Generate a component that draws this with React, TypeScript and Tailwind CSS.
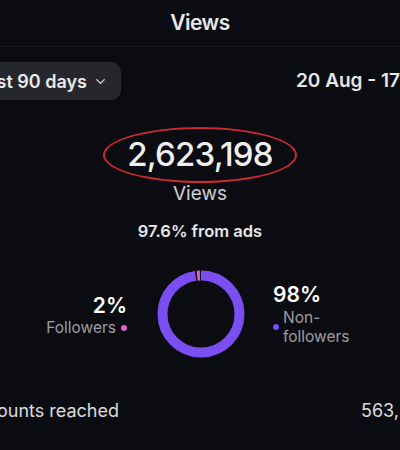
import { ChevronDown } from 'lucide-react';

function Donut() {
  const r = 38.5;
  const c = 2 * Math.PI * r;
  const pinkLen = c * 0.012;
  const gap = c * 0.006;
  const purpleLen = c - pinkLen - gap * 2;
  return (
    <svg width="88" height="88" viewBox="0 0 88 88" className="-rotate-90">
      <circle cx="44" cy="44" r={r} fill="none" stroke="#7b4ef2" strokeWidth="10"
        strokeDasharray={`${purpleLen} ${c - purpleLen}`} strokeDashoffset={0} />
      <circle cx="44" cy="44" r={r} fill="none" stroke="#e45bd0" strokeWidth="10"
        strokeDasharray={`${pinkLen} ${c - pinkLen}`} strokeDashoffset={-(purpleLen + gap)} />
    </svg>
  );
}

export default function App() {
  return (
    <div className="w-[400px] h-[450px] overflow-hidden bg-[#0b0c11] text-white font-['Inter',sans-serif]">
      <div className="h-[47px] flex items-center justify-center border-b border-white/5">
        <h1 className="text-[21px] font-semibold tracking-tight text-white/90">Views</h1>
      </div>

      <div className="flex items-center mt-[15px] h-[38px]">
        <div className="-ml-[38px] h-[38px] pl-[14px] pr-[13px] flex items-center gap-[6px] rounded-[10px] bg-[#26272c] shrink-0 whitespace-nowrap">
          <span className="text-[18px] font-semibold text-white/90">Last 90 days</span>
          <ChevronDown size={15} strokeWidth={2.2} className="text-white/80" />
        </div>
        <div className="ml-auto w-[104px] shrink-0 whitespace-nowrap text-[19px] font-semibold text-white/90">20 Aug - 17 Nov</div>
      </div>

      <div className="flex flex-col items-center mt-[27px]">
        <div className="w-[194px] h-[56px] rounded-[50%] border-2 border-[#c92a2f] flex items-center justify-center">
          <span className="text-[33px] font-medium tracking-tight text-white/95">2,623,198</span>
        </div>
        <div className="text-[19px] text-white/80 leading-none mt-[1px]">Views</div>
        <div className="text-[16.5px] font-semibold text-white/90 mt-[16px]">97.6% from ads</div>
      </div>

      <div className="flex items-start justify-center mt-[26px] h-[90px]">
        <div className="w-[128px] flex flex-col items-end mt-[25px] shrink-0">
          <div className="text-[21px] font-semibold leading-none">2%</div>
          <div className="flex items-center gap-[5px] mt-[4px]">
            <span className="text-[15.5px] text-white/60 leading-none">Followers</span>
            <span className="w-[6px] h-[6px] rounded-full bg-[#e45bd0]" />
          </div>
        </div>
        <div className="ml-[30px] mr-[28px] shrink-0">
          <Donut />
        </div>
        <div className="w-[128px] flex flex-col items-start mt-[14px] shrink-0">
          <div className="text-[21px] font-semibold leading-none">98%</div>
          <div className="flex items-start gap-[4px] mt-[3px]">
            <span className="w-[6px] h-[6px] rounded-full bg-[#7b4ef2] mt-[16px]" />
            <span className="text-[15.5px] text-white/60 leading-[19px]">Non-<br />followers</span>
          </div>
        </div>
      </div>

      <div className="flex items-center mt-[37px]">
        <div className="-ml-[36px] text-[18px] text-white/85 whitespace-nowrap shrink-0">Accounts reached</div>
        <div className="ml-auto w-[39px] shrink-0 whitespace-nowrap text-[18px] text-white/85">563,221</div>
      </div>
    </div>
  );
}
